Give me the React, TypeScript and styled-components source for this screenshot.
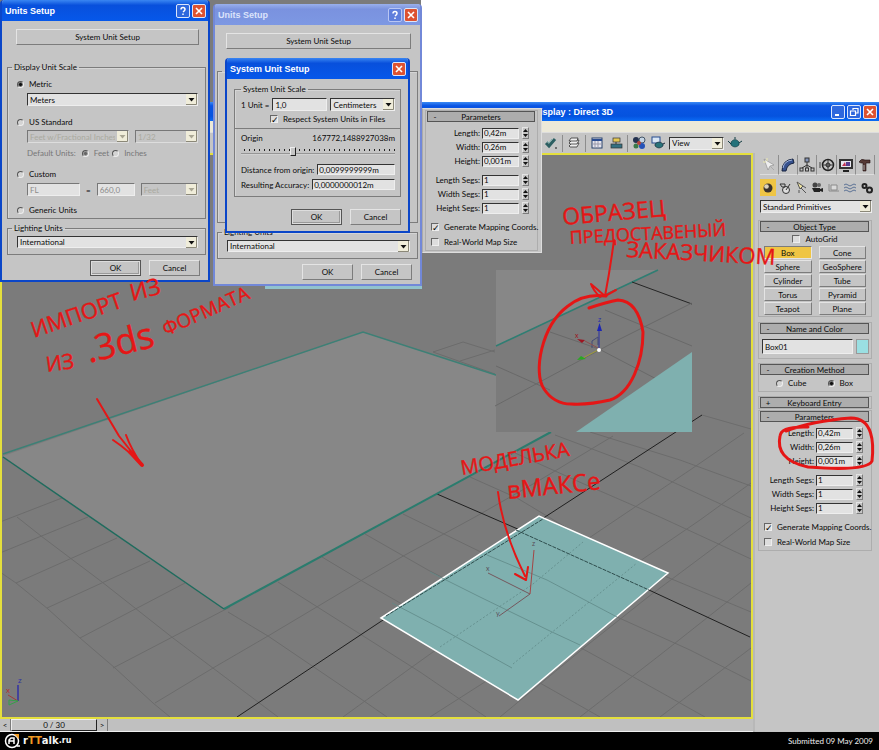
import React, { ReactNode, useId } from 'react';
import styled, { createGlobalStyle, css } from 'styled-components';

const FACE = '#c5c5c5';
const LIGHT = '#e4e4e4';
const DARK = '#7c7c7c';
const RED = '#e51616';
const FONT = 'Lato, "Liberation Sans", Arial, sans-serif';
const TITLE_FONT = '"Liberation Sans", Arial, sans-serif';

const Global = createGlobalStyle`
  *, *::before, *::after { box-sizing: border-box; }
  body { margin: 0; background: #fff; font: 8px/10px ${FONT}; color: #0a0a0a; }
  button, input, select { font: inherit; color: inherit; margin: 0; border-radius: 0; }
`;

const bevel = css`
  border: 1px solid;
  border-color: ${LIGHT} ${DARK} ${DARK} ${LIGHT};
`;
const sunken = css`
  border: 1px solid;
  border-color: #333 #eee #eee #333;
`;

/* ---------- page ---------- */
const Page = styled.div`
  position: relative;
  display: flex;
  flex-direction: column;
  min-height: 100vh;
  overflow: hidden;
`;
const Desktop = styled.div`
  height: 102px;
  max-width: 421px;
  background: #7b7b7b;
`;
const TitleBar = styled.header`
  display: flex;
  align-items: center;
  height: 19px;
  padding: 0 2px;
  background: linear-gradient(#3b8bf5, #0a55e4 20%, #0553df 75%, #0a6cf5);
`;
const AppTitle = styled.h1`
  margin: 0 auto 0 0;
  width: 611px;
  text-align: right;
  white-space: pre;
  color: #fff;
  font: bold 9px/12px ${TITLE_FONT};
`;
const CaptionButtons = styled.div`
  display: flex;
  gap: 2px;
`;
const CaptionButton = styled.button<{ $tone?: 'red' | 'soft' }>`
  display: grid;
  place-items: center;
  width: 14px;
  height: 14px;
  padding: 0;
  border: 1px solid ${(p) => (p.$tone === 'soft' ? '#b9c6f3' : '#dbe6fb')};
  border-radius: 2px;
  color: #fff;
  background: ${(p) => (p.$tone === 'red' ? '#dd5231' : p.$tone === 'soft' ? '#5f7fdc' : '#2f68dd')};
  svg { width: 10px; height: 10px; }
`;
const MenuStrip = styled.div`
  height: 11px;
  background: #ece9d8;
`;
const Toolbar = styled.div`
  display: flex;
  align-items: center;
  gap: 3px;
  height: 21px;
  padding-left: 543px;
  background: ${FACE};
  border-top: 1px solid #ddd;
`;
const ToolButton = styled.button`
  display: grid;
  place-items: center;
  width: 16px;
  height: 16px;
  padding: 0;
  border: 0;
  background: none;
  svg { width: 14px; height: 14px; }
`;
const Separator = styled.i<{ $wide?: boolean }>`
  width: 1px;
  height: 17px;
  background: #8d8d8d;
`;
const Workspace = styled.div`
  flex: 1;
  display: flex;
  min-height: 0;
  background: ${FACE};
`;
const MainColumn = styled.main`
  flex: 1;
  display: flex;
  flex-direction: column;
  min-width: 0;
`;
const Viewport = styled.div`
  flex: 1;
  min-height: 0;
  display: flex;
  border: 2px solid #e4df3c;
  background: #7b7b7b;
`;
const Scene = styled.svg`
  flex: 1;
  min-width: 0;
  width: 100%;
  height: 562px;
`;
const Timeline = styled.div`
  display: flex;
  height: 13px;
  background: #c0c0c0;
  border-bottom: 1px solid #eee;
`;
const TimeButton = styled.button`
  width: 11px;
  padding: 0;
  border: 0;
  border-right: 1px solid ${DARK};
  background: none;
`;
const TimeSlider = styled.button`
  width: 86px;
  padding: 0;
  background: ${FACE};
  border: 1px solid;
  border-color: #eee #222 #222 #eee;
`;
const Footer = styled.footer`
  display: flex;
  align-items: center;
  justify-content: space-between;
  height: 18px;
  padding: 0 6px 0 4px;
  background: #000;
  color: #eee;
`;
const Brand = styled.a`
  display: flex;
  align-items: center;
  color: #f4f4f4;
  font: bold 10px/12px "DejaVu Sans", sans-serif;
  text-decoration: none;
  svg { width: 19px; height: 18px; }
  em { font-style: normal; color: #f09a22; }
  small { font-size: 8px; }
`;

/* ---------- controls ---------- */
const PushButton = styled.button<{ $default?: boolean; $active?: boolean; $h?: number }>`
  ${bevel}
  min-width: 0;
  height: ${(p) => p.$h ?? 16}px;
  padding: 0;
  line-height: 8px;
  white-space: nowrap;
  background: ${(p) => (p.$active ? '#efc544' : FACE)};
  ${(p) => p.$active && `border-color: ${DARK} ${LIGHT} ${LIGHT} ${DARK};`}
  ${(p) => p.$default && 'border-color: #555; box-shadow: inset 0 0 0 1px #ddd, inset -2px -2px #999;'}
`;
const Field = styled.input`
  ${sunken}
  width: 100%;
  min-width: 0;
  height: 13px;
  padding: 0 2px;
  background: #e2e2e2;
  &:disabled { color: #8b8b8b; border-color: #777 #eee #eee #777; }
`;
const PickBox = styled.div`
  display: grid;
  flex: 1;
  min-width: 0;
  height: 13px;
  select {
    ${sunken}
    appearance: none;
    grid-area: 1 / 1;
    width: 100%;
    min-width: 0;
    padding: 0 13px 0 2px;
    background: #e2e2e2;
    white-space: nowrap;
    overflow: hidden;
  }
  select:disabled { color: #aaaaa0; background: ${FACE}; border-color: #777 #ddd #ddd #777; opacity: 1; }
  svg {
    grid-area: 1 / 1;
    justify-self: end;
    align-self: center;
    width: 11px;
    height: 11px;
    margin-right: 1px;
    pointer-events: none;
  }
`;
function Pick({ label, value, disabled }: { label: string; value: string; disabled?: boolean }) {
  return (
    <PickBox>
      <select aria-label={label} disabled={disabled} defaultValue={value}>
        <option>{value}</option>
      </select>
      <svg viewBox="0 0 11 11">
        <rect width="11" height="11" fill="#f0edda" />
        <path d="M10.5 0V10.5H0" fill="none" stroke="#8b8878" />
        <path d="M2.5 4h6L5.500 7.500z" fill={disabled ? '#aaa794' : '#111'} />
      </svg>
    </PickBox>
  );
}
const CheckLabel = styled.label<{ $muted?: boolean }>`
  display: flex;
  align-items: center;
  gap: 5px;
  height: 10px;
  white-space: nowrap;
  color: ${(p) => (p.$muted ? '#777' : 'inherit')};
`;
const Radio = styled.input`
  appearance: none;
  width: 7px;
  height: 7px;
  border: 1px solid;
  border-color: #555 #eee #eee #555;
  border-radius: 50%;
  background: #d4d4d4;
  &:checked { background: radial-gradient(#111 0 1px, #ccc 3px); }
  &:disabled:checked { background: radial-gradient(#666 0 1px, #ccc 3px); }
`;
const CheckBox = styled.input`
  appearance: none;
  display: grid;
  place-items: center;
  width: 8px;
  height: 8px;
  border: 1px solid;
  border-color: #666 #eee #eee #666;
  background: #ddd;
  &:checked::after {
    content: '✓';
    font: bold 9px/8px "DejaVu Sans", sans-serif;
    color: #000;
  }
`;
const RadioItem = ({ name, text, checked, disabled }: { name: string; text: string; checked?: boolean; disabled?: boolean }) => (
  <CheckLabel $muted={disabled}>
    <Radio type="radio" name={name} defaultChecked={checked} disabled={disabled} />
    {text}
  </CheckLabel>
);
const CheckItem = ({ text, checked }: { text: string; checked?: boolean }) => (
  <CheckLabel>
    <CheckBox type="checkbox" defaultChecked={checked} />
    {text}
  </CheckLabel>
);

/* ---------- dialogs ---------- */
const Dialog = styled.section<{ $x: number; $y: number; $w: number; $soft?: boolean }>`
  position: absolute;
  left: ${(p) => p.$x}px;
  top: ${(p) => p.$y}px;
  width: ${(p) => p.$w}px;
  border: 2px solid ${(p) => (p.$soft ? '#7288d8' : '#0b46c8')};
  border-top: 0;
  border-radius: 4px 4px 0 0;
  overflow: hidden;
  background: ${FACE};
`;
const DialogBar = styled.header<{ $soft?: boolean }>`
  display: flex;
  align-items: center;
  justify-content: space-between;
  height: 21px;
  padding: 1px 2px 0 3px;
  color: ${(p) => (p.$soft ? '#dbe3fb' : '#fff')};
  background: ${(p) =>
    p.$soft ? 'linear-gradient(#9ab0ec, #7a92df 25%, #7d98e3)' : 'linear-gradient(#3a86f2, #0850dc 25%, #0658ea)'};
`;
const DialogTitle = styled.h2`
  margin: 0;
  font: bold 9px/12px ${TITLE_FONT};
`;
const DialogBody = styled.form<{ $left: number }>`
  display: flex;
  flex-direction: column;
  padding: 8px 2px 4px ${(p) => p.$left}px;
`;
const Group = styled.fieldset<{ $sys?: boolean; $covered?: boolean }>`
  display: flex;
  flex-direction: column;
  min-width: 0;
  margin: 0;
  padding: ${(p) => (p.$sys ? '4px 5px 6px 6px' : '3px 7px 3px 9px')};
  border: 1px solid ${DARK};
  box-shadow: inset 1px 1px #d5d5d5;
  legend { height: 10px; margin-left: ${(p) => (p.$sys ? 0 : -5)}px; padding: 0 2px; }
  ${(p) => p.$covered && '> * { visibility: hidden; }'}
`;
const LightingGroup = styled(Group)`
  margin-top: 4px;
  padding-bottom: 6px;
`;
const Indent = styled.div<{ $top?: number }>`
  display: flex;
  align-items: center;
  gap: 6px;
  padding-left: 10px;
  margin-top: ${(p) => p.$top ?? 4}px;
`;
const MutedIndent = styled(Indent)`
  color: #777;
`;
const Fixed = styled.div<{ $w: number }>`
  display: flex;
  flex: none;
  width: ${(p) => p.$w}px;
`;
const WideButton = styled(PushButton)`
  margin: 0 7px 17px 9px;
`;
const Actions = styled.div`
  display: flex;
  justify-content: flex-end;
  gap: 8px;
  padding-right: 6px;
  margin-top: 5px;
  button { width: 51px; }
`;
const BodyRow = styled.div<{ $top?: number; $between?: boolean }>`
  display: flex;
  align-items: center;
  justify-content: ${(p) => (p.$between ? 'space-between' : 'flex-start')};
  gap: 3px;
  margin-top: ${(p) => p.$top ?? 0}px;
  white-space: nowrap;
`;
const Shift = styled.div`
  margin-top: 3px;
  padding-left: 29px;
`;
const Rule = styled.hr`
  align-self: stretch;
  margin: 4px -5px 4px -6px;
  border: 0;
  border-top: 1px solid ${DARK};
`;
const OriginSlider = styled.input`
  appearance: none;
  height: 11px;
  width: 100%;
  margin: 3px 0 7px;
  background:
    repeating-linear-gradient(90deg, #222 0 1px, transparent 1px 5px) 3px 3px / 100% 2px no-repeat,
    linear-gradient(#777, #eee) 0 7px / 100% 2px no-repeat;
  &::-webkit-slider-thumb {
    appearance: none;
    width: 6px;
    height: 9px;
    background: ${FACE};
    border: 1px solid;
    border-color: #eee #222 #222 #eee;
  }
`;
const ShortField = styled(Field)`
  height: 11px;
  width: 88px;
  padding: 0 1px;
  margin-left: auto;
`;

const CloseGlyph = () => (
  <svg viewBox="0 0 10 10"><path d="M2 2l6 6M8 2L2 8" stroke="#fff" strokeWidth="1.6" /></svg>
);
const HelpGlyph = () => (
  <svg viewBox="0 0 10 10"><path d="M3 3.500Q3 1.500 5 1.500T7 3.500Q7 4.500 5 6M5 7.500V9" fill="none" stroke="#fff" strokeWidth="1.500" /></svg>
);

function UnitsDialog({ x, y, w, soft }: { x: number; y: number; w: number; soft?: boolean }) {
  const name = useId();
  return (
    <Dialog $x={x} $y={y} $w={w} $soft={soft} aria-label="Units Setup">
      <DialogBar $soft={soft}>
        <DialogTitle>Units Setup</DialogTitle>
        <CaptionButtons>
          <CaptionButton aria-label="Help" $tone={soft ? 'soft' : undefined}><HelpGlyph /></CaptionButton>
          <CaptionButton aria-label="Close" $tone="red"><CloseGlyph /></CaptionButton>
        </CaptionButtons>
      </DialogBar>
      <DialogBody $left={soft ? 2 : 5}>
        <WideButton type="button">System Unit Setup</WideButton>
        <Group $covered={soft}>
          <legend>Display Unit Scale</legend>
          <BodyRow $top={4}><RadioItem name={name} text="Metric" checked /></BodyRow>
          <Indent><Pick label="Metric unit" value="Meters" /></Indent>
          <BodyRow $top={11}><RadioItem name={name} text="US Standard" /></BodyRow>
          <Indent $top={3}>
            <Fixed $w={102}><Pick label="US unit" value="Feet w/Fractional Inches" disabled /></Fixed>
            <Pick label="Fraction" value="1/32" disabled />
          </Indent>
          <MutedIndent $top={5}>
            Default Units:
            <BodyRow>
              <RadioItem name={name + 'd'} text="Feet" checked disabled />
              <RadioItem name={name + 'd'} text="Inches" disabled />
            </BodyRow>
          </MutedIndent>
          <BodyRow $top={11}><RadioItem name={name} text="Custom" /></BodyRow>
          <Indent>
            <Fixed $w={53}><Field aria-label="Custom unit name" defaultValue="FL" disabled /></Fixed>
            =
            <Fixed $w={38}><Field aria-label="Custom unit size" defaultValue="660,0" disabled /></Fixed>
            <Pick label="Custom unit base" value="Feet" disabled />
          </Indent>
          <BodyRow $top={9}><RadioItem name={name} text="Generic Units" /></BodyRow>
        </Group>
        <LightingGroup>
          <legend>Lighting Units</legend>
          <Pick label="Lighting units" value="International" />
        </LightingGroup>
        <Actions>
          <PushButton type="button" $default={!soft}>OK</PushButton>
          <PushButton type="button">Cancel</PushButton>
        </Actions>
      </DialogBody>
    </Dialog>
  );
}

const SystemBody = styled(DialogBody)`
  padding-top: 5px;
  padding-right: 7px;
  padding-bottom: 6px;
`;
const SystemActions = styled(Actions)`
  margin-top: 12px;
  padding-right: 0;
`;
function SystemUnitDialog() {
  return (
    <Dialog $x={225} $y={58} $w={185} aria-label="System Unit Setup">
      <DialogBar>
        <DialogTitle>System Unit Setup</DialogTitle>
        <CaptionButton aria-label="Close" $tone="red"><CloseGlyph /></CaptionButton>
      </DialogBar>
      <SystemBody $left={7}>
        <Group $sys>
          <legend>System Unit Scale</legend>
          <BodyRow>
            <label htmlFor="unit-size">1 Unit =</label>
            <Fixed $w={55}><Field id="unit-size" defaultValue="1,0" /></Fixed>
            <Pick label="System unit" value="Centimeters" />
          </BodyRow>
          <Shift><CheckItem text="Respect System Units in Files" checked /></Shift>
          <Rule />
          <BodyRow $between>
            <label htmlFor="origin">Origin</label>
            <output>167772,1488927038m</output>
          </BodyRow>
          <OriginSlider id="origin" type="range" min={0} max={100} defaultValue={33} />
          <BodyRow>
            <label htmlFor="distance">Distance from origin:</label>
            <ShortField id="distance" defaultValue="0,0099999999m" />
          </BodyRow>
          <BodyRow $top={4}>
            <label htmlFor="accuracy">Resulting Accuracy:</label>
            <ShortField id="accuracy" defaultValue="0,0000000012m" />
          </BodyRow>
        </Group>
        <SystemActions>
          <PushButton type="button" $default>OK</PushButton>
          <PushButton type="button">Cancel</PushButton>
        </SystemActions>
      </SystemBody>
    </Dialog>
  );
}

/* ---------- command panel ---------- */
const CommandPanel = styled.aside`
  display: flex;
  flex-direction: column;
  width: 126px;
  padding: 2px 8px 0 5px;
  border-left: 2px solid #b8b8b8;
  background: ${FACE};
`;
const Tabs = styled.div`
  display: grid;
  grid-template-columns: repeat(6, 1fr);
  height: 20px;
  margin: 0 -4px 4px 0;
`;
const Tab = styled.button`
  display: grid;
  place-items: center;
  padding: 0;
  border: 0;
  border-right: 1px solid #8e8e8e;
  border-bottom: 1px solid #ddd;
  background: none;
  svg { width: 16px; height: 16px; }
`;
const Categories = styled.div`
  display: grid;
  grid-template-columns: repeat(7, 1fr);
  height: 17px;
  margin: 0 -4px 4px 0;
`;
const Category = styled.button<{ $on?: boolean }>`
  display: grid;
  place-items: center;
  padding: 0;
  border: 0;
  background: ${(p) => (p.$on ? '#efc544' : 'none')};
  svg { width: 14px; height: 14px; }
`;
const Rollout = styled.section<{ $gap?: number }>`
  margin: 0 -1px ${(p) => p.$gap ?? 4}px -2px;
  padding: 0 2px 0 1px;
  border: 1px solid #adadad;
`;
const RolloutHead = styled.button`
  display: grid;
  grid-template-columns: 8px 1fr 8px;
  align-items: center;
  width: 100%;
  height: 11px;
  padding: 0 3px;
  border: 1px solid #555;
  background: #adadad;
  line-height: 8px;
`;
const RolloutBody = styled.div<{ $pad: string }>`
  padding: ${(p) => p.$pad};
`;
function Roll({ title, pad, closed, gap, children }: { title: string; pad?: string; closed?: boolean; gap?: number; children?: ReactNode }) {
  return (
    <Rollout $gap={gap}>
      <RolloutHead type="button" aria-expanded={!closed}>
        <span>{closed ? '+' : '-'}</span>
        <span>{title}</span>
      </RolloutHead>
      {children && <RolloutBody $pad={pad ?? '4px'}>{children}</RolloutBody>}
    </Rollout>
  );
}
const ButtonGrid = styled.div`
  display: grid;
  grid-template-columns: 1fr 1fr;
  gap: 1px 7px;
  margin-top: 2px;
`;
const Centered = styled.div<{ $gap?: number }>`
  display: flex;
  justify-content: center;
  gap: ${(p) => p.$gap ?? 0}px;
`;
const NameRow = styled.div`
  display: flex;
  gap: 3px;
`;
const NameField = styled(Field)`
  height: 15px;
`;
const Swatch = styled.button`
  flex: none;
  width: 13px;
  height: 15px;
  padding: 0;
  border: 1px solid #999;
  background: #9adfe2;
`;
const ParamRow = styled.div<{ $top: number }>`
  display: grid;
  grid-template-columns: 1fr 37px 8px;
  column-gap: 2px;
  align-items: center;
  height: 14px;
  margin-top: ${(p) => p.$top}px;
  padding-right: 6px;
  label { text-align: right; white-space: nowrap; }
  button { margin-left: 1px; }
`;
const ParamField = styled(Field)`
  height: 11px;
  padding: 0 1px;
`;
const Spinner = styled.button`
  ${bevel}
  display: grid;
  place-items: center;
  width: 7px;
  height: 12px;
  padding: 0;
  background: ${FACE};
  svg { width: 5px; height: 10px; }
`;
const Checks = styled.div`
  display: grid;
  gap: 5px;
  padding: 7px 0 3px 4px;
`;
const PARAMS: [string, string, number][] = [
  ['Length:', '0,42m', 4], ['Width:', '0,26m', 0], ['Height:', '0,001m', 0],
  ['Length Segs:', '1', 5], ['Width Segs:', '1', 0], ['Height Segs:', '1', 0],
];
function Parameters() {
  const id = useId();
  return (
    <Roll title="Parameters" pad="0">
      {PARAMS.map(([label, value, top], i) => (
        <ParamRow key={label} $top={top}>
          <label htmlFor={id + i}>{label}</label>
          <ParamField id={id + i} defaultValue={value} />
          <Spinner type="button" aria-label={'Adjust ' + label}>
            <svg viewBox="0 0 5 10"><path d="M0 4l2.500-3L5 4zM0 6h5L2.500 9z" fill="#111" /></svg>
          </Spinner>
        </ParamRow>
      ))}
      <Checks>
        <CheckItem text="Generate Mapping Coords." checked />
        <CheckItem text="Real-World Map Size" />
      </Checks>
    </Roll>
  );
}
const FloatingPanel = styled.section`
  position: absolute;
  left: 422px;
  top: 108px;
  width: 120px;
  height: 145px;
  padding: 1px 4px 0;
  background: ${FACE};
  border: 1px solid #ddd;
  border-left-color: #aaa;
`;

const TAB_ICONS: [string, ReactNode][] = [
  ['Create', <g key="i"><path d="M3 2l4 11 2-4 4-1z" fill="#eee" stroke="#888" strokeWidth=".6" /><path d="M9 9l4 4" stroke="#aaa" /><path d="M2 5h3M6 1v3" stroke="#ece9b0" /></g>],
  ['Modify', <g key="i"><path d="M2 14Q2 3 13 2l1 4Q7 7 6 14z" fill="#36518e" stroke="#16233f" /><path d="M3 11q1-7 9-8" fill="none" stroke="#a8b9df" /></g>],
  ['Hierarchy', <g key="i" fill="none" stroke="#333"><rect x="6" y="1" width="4" height="4" fill="#8293b7" /><path d="M8 5v3M3 11L8 8l5 3M8 8v3" /><rect x="1" y="11" width="3" height="3" /><rect x="6.500" y="11" width="3" height="3" /><rect x="12" y="11" width="3" height="3" /></g>],
  ['Motion', <g key="i" fill="none" stroke="#222"><circle cx="9" cy="8" r="5.500" strokeWidth="1.500" /><circle cx="9" cy="8" r="2" /><path d="M9 3v10M4 8h10M0 6h2M0 8h2M0 10h2" strokeWidth=".8" /></g>],
  ['Display', <g key="i"><rect x="1" y="2" width="14" height="10" fill="#333" /><rect x="3" y="4" width="10" height="6" fill="#e8e8f0" /><path d="M4 9l3-4 1 4z" fill="#c33052" /><rect x="8" y="5" width="4" height="4" fill="#593f91" /><path d="M5 14h6" stroke="#222" strokeWidth="2" /></g>],
  ['Utilities', <g key="i"><path d="M2 5Q4 1 8 3h5v3H9v8H6V6H4z" fill="#563a36" stroke="#211" strokeWidth=".6" /><path d="M7 8v5" stroke="#aaa" /></g>],
];
const CATEGORY_ICONS: [string, ReactNode][] = [
  ['Geometry', <g key="i"><circle cx="7" cy="7" r="4.500" fill="#39322c" /><circle cx="5.500" cy="5.500" r="2.300" fill="#ddd2ba" /></g>],
  ['Shapes', <g key="i" fill="none" stroke="#333"><circle cx="8" cy="9" r="3.500" fill="#ddd" /><path d="M2 3h5v3H4zM8 9l4-6" /></g>],
  ['Lights', <g key="i"><path d="M3 1l3 7 3-3z" fill="#eee3a0" stroke="#555" /><path d="M7 7l5 5M9 5l3 2M5 9v3" stroke="#555" /></g>],
  ['Cameras', <g key="i"><circle cx="5" cy="4" r="2.500" fill="#444" /><circle cx="9" cy="4" r="2" fill="#666" /><path d="M2 7h8v4H4zM10 8l3-1v4l-3-1z" fill="#222" /></g>],
  ['Helpers', <g key="i" fill="none" stroke="#8a8a8a"><path d="M2 3v7h10" /><path d="M4 4h6v5H4z" fill="#dadada" /></g>],
  ['Space Warps', <g key="i" fill="none" stroke="#5d7396"><path d="M1 4q2-2 4 0t4 0 4 0M1 7q2-2 4 0t4 0 4 0M1 10q2-2 4 0t4 0 4 0" /></g>],
  ['Systems', <g key="i" fill="none" stroke="#222" strokeWidth="2"><circle cx="4.500" cy="5" r="2" /><circle cx="9.500" cy="9" r="2.500" /></g>],
];
const PRIMITIVES = ['Box', 'Cone', 'Sphere', 'GeoSphere', 'Cylinder', 'Tube', 'Torus', 'Pyramid', 'Teapot', 'Plane'];
const PrimitiveSet = styled.div`
  display: flex;
  margin: 0 -1px 7px 0;
`;

function Commands() {
  return (
    <CommandPanel>
      <Tabs>
        {TAB_ICONS.map(([n, icon]) => (
          <Tab key={n} aria-label={n}><svg viewBox="0 0 16 16">{icon}</svg></Tab>
        ))}
      </Tabs>
      <Categories>
        {CATEGORY_ICONS.map(([n, icon], i) => (
          <Category key={n} aria-label={n} $on={i === 0}><svg viewBox="0 0 14 14">{icon}</svg></Category>
        ))}
      </Categories>
      <PrimitiveSet><Pick label="Primitive set" value="Standard Primitives" /></PrimitiveSet>
      <Roll title="Object Type" pad="2px 3px 1px 4px" gap={5}>
        <Centered><CheckItem text="AutoGrid" /></Centered>
        <ButtonGrid>
          {PRIMITIVES.map((p, i) => (
            <PushButton key={p} type="button" $h={13} $active={i === 0}>{p}</PushButton>
          ))}
        </ButtonGrid>
      </Roll>
      <Roll title="Name and Color" pad="5px 0 4px 2px">
        <NameRow>
          <NameField aria-label="Object name" defaultValue="Box01" />
          <Swatch type="button" aria-label="Object color" />
        </NameRow>
      </Roll>
      <Roll title="Creation Method" pad="3px 0 3px">
        <Centered $gap={21}>
          <RadioItem name="creation" text="Cube" />
          <RadioItem name="creation" text="Box" checked />
        </Centered>
      </Roll>
      <Roll title="Keyboard Entry" closed gap={1} />
      <Parameters />
    </CommandPanel>
  );
}

/* ---------- main toolbar ---------- */
const icon = (children: ReactNode) => <svg viewBox="0 0 14 14">{children}</svg>;
function MainToolbar() {
  return (
    <Toolbar role="toolbar">
      <ToolButton aria-label="Align">{icon(<><path d="M2 7l3 3 6-7" fill="none" stroke="#2c5f62" strokeWidth="3" /><path d="M3 5l2 2 3-4" stroke="#7fb0ad" fill="none" /><circle cx="12" cy="12" r=".8" /></>)}</ToolButton>
      <Separator />
      <ToolButton aria-label="Layers">{icon(<g fill="#eee" stroke="#333" strokeWidth=".8"><path d="M2 10l3-3h7l-2 4H3z" /><path d="M2 7l3-3h7l-2 4H3z" /><path d="M2 5l2-3h7l-1 3z" /></g>)}</ToolButton>
      <Separator />
      <ToolButton aria-label="Curve Editor">{icon(<><rect x="2" y="2" width="10" height="10" fill="#e5e5ee" stroke="#29426c" /><path d="M2 4h10" stroke="#2b4d91" strokeWidth="2" /><path d="M5 5v7M8 5v7M3 8h9" stroke="#99a" /></>)}</ToolButton>
      <ToolButton aria-label="Schematic View">{icon(<><rect x="4" y="2" width="7" height="4" fill="#e5c852" stroke="#333" strokeWidth=".7" /><rect x="2" y="8" width="11" height="4" fill="#347081" stroke="#333" strokeWidth=".7" /><path d="M7 6v2" stroke="#333" /></>)}</ToolButton>
      <Separator />
      <ToolButton aria-label="Material Editor">{icon(<><circle cx="4" cy="4" r="3" fill="#24324f" /><circle cx="10" cy="4" r="3" fill="#c4d4e4" stroke="#456" /><circle cx="10" cy="10" r="3" fill="#2552b8" /><circle cx="4" cy="10" r="2.500" fill="#397a48" /><circle cx="7" cy="7" r="2" fill="#b5423b" /></>)}</ToolButton>
      <ToolButton aria-label="Render Scene">{icon(<><rect x="1" y="1" width="8" height="6" fill="#d9e6f4" stroke="#264d8f" /><path d="M4 8q4-4 8 0v2q-4 4-8 0z" fill="#2a737a" stroke="#123" strokeWidth=".6" /><path d="M12 8l2-1" stroke="#123" /></>)}</ToolButton>
      <Fixed $w={55}><Pick label="Render type" value="View" /></Fixed>
      <ToolButton aria-label="Quick Render">{icon(<><path d="M3 6q4-5 8 0v3q-4 4-8 0z" fill="#25727b" stroke="#103a40" strokeWidth=".6" /><path d="M11 7l3-2M3 8L0 5M7 3V1" stroke="#103a40" /></>)}</ToolButton>
    </Toolbar>
  );
}

/* ---------- scene ---------- */
const GRID = [
  'M17 517L41 536 102 582 173 638 278 717', 'M0 572L16 583 48 609 80 638 115 668 153 703 170 717',
  'M228 612L268 636 361 699 387 717', 'M278 582L420 672 486 717', 'M322 557L362 581 381 592 503 662 600 717',
  'M365 534L428 570 480 597 552 632 603 660 705 717', 'M403 514L487 555 547 580 617 617 690 650 751 681',
  'M470 477L517 498 587 540 650 570 751 612', 'M515 453L584 484 660 517 751 559', 'M555 435L640 467 751 518', 'M590 432L680 460 751 486', 'M702 415L751 429',
  'M0 522L62 498', 'M0 553L88 517', 'M16 583L117 538', 'M47 608L150 561', 'M80 638L185 583', 'M113 668L230 607',
  'M155 703L213 668 268 636 362 580 405 555 475 517 540 480 613 436',
  'M343 717L412 667 440 647 533 584 583 542 690 470 744 433', 'M430 717L513 664 580 609 637 563 700 520 751 483',
  'M500 717L585 647 648 597 751 520', 'M580 717L660 655 751 583', 'M660 717L751 648',
  'M433 352L463 342 495 352M433 352L495 374M460 361L495 350',
];
function SceneDrawing() {
  return (
    <Scene viewBox="2 155 749 562" preserveAspectRatio="xMinYMin slice" role="img" aria-label="Perspective viewport">
      <rect x="265" y="284" width="157" height="5" fill="#91c3cd" />
      <g fill="none" stroke="#6c6c6c">{GRID.map((d) => <path key={d} d={d} />)}</g>
      <path d="M237 717L380 622 545 517 702 415M437 494L520 530 750 637" fill="none" stroke="#202020" />
      <path d="M3 456L363 332 499 376V432H551L224 609z" fill="#878787" />
      <path d="M3 454L363 332 499 376" fill="none" stroke="#3d8076" strokeWidth="1.500" />
      <path d="M551 432L224 609" stroke="#2b7c6e" strokeWidth="2" />
      <path d="M3 457L224 609" stroke="#1f6c5e" strokeWidth="1.500" />
      <path d="M381 618L539 516 668 573 518 700z" fill="#7fb0af" stroke="#fff" strokeWidth="1.500" />
      <g fill="none" stroke="#5f8988" strokeWidth=".8">
        <path d="M392 603L440 628 512 668M430 572L480 597 552 632 580 645M487 555L547 580 617 617" />
        <path d="M440 647L533 584 583 542M513 664L637 563" strokeDasharray="2 2" />
      </g>
      <path d="M386 616L543 519M516 530L649 590" stroke="#2e4d4d" fill="none" strokeDasharray="4 1" />
      <g stroke="#75575d" fill="none"><path d="M488 573L530 594 499 616" /><path d="M530 594L534 550" stroke="#a34545" /></g>
      <g fill="#574e5a" fontFamily={FONT} fontSize="7"><text x="486" y="571">x</text><text x="496" y="616">y</text><text x="532" y="546">z</text></g>

      <rect x="496" y="270" width="196" height="162" fill="#7b7b7b" />
      <path d="M496 270H656L496 346z" fill="#878787" />
      <path d="M496 346L658 270" stroke="#2f7e73" strokeWidth="1.500" />
      <path d="M632 282L692 304" stroke="#252525" />
      <g fill="none" stroke="#696969"><path d="M692 303L620 339 495 406M605 310L692 346M550 332L599 349 664 383M496 366L550 390" /></g>
      <path d="M576 432L692 352V432z" fill="#7fb0af" />
      <g fill="none"><path d="M599 348V330" stroke="#2a30a5" /><path d="M597 331l2.500-8 2.500 8z" fill="#1b24b4" /><path d="M592 341l6-4v8M592 341v7" stroke="#444a78" /><path d="M598 348l-13-7" stroke="#8b5151" /><path d="M577 339l8 1-3 3z" fill="#9d1420" /><path d="M598 350l-15 8" stroke="#a09c36" /><path d="M577 360l4-4 5 3z" fill="#28a822" /></g>
      <circle cx="599" cy="350" r="2" fill="#fff" />
      <g fontFamily={FONT} fontSize="7"><text x="598" y="322" fill="#2a30a5">z</text><text x="575" y="338" fill="#9d1420">x</text></g>

      <path d="M18 701V685" stroke="#3131a5" strokeWidth="1.500" /><path d="M18 701L8 695" stroke="#a03a3a" /><path d="M18 701l-9 4v-5z" stroke="#35a04a" fill="none" />
      <g fontFamily={FONT} fontSize="8"><text x="18" y="683" fill="#3131a5">z</text><text x="6" y="693" fill="#b33030">x</text></g>
    </Scene>
  );
}

/* ---------- red pen notes ---------- */
const Notes = styled.svg`
  position: absolute;
  left: 0;
  top: 0;
  width: 879px;
  height: 750px;
  pointer-events: none;
  text { font-family: "Open Sans", "Noto Sans", sans-serif; fill: ${RED}; stroke: ${RED}; stroke-width: 0.4; }
`;
const NOTE_TEXT: [string, number, number, number, number][] = [
  ['ИМПОРТ', 34, 338, 22, -19], ['ИЗ', 132, 301, 23, -14],
  ['ИЗ', 47, 372, 21, -8], ['.3ds', 89, 363, 36, -14], ['ФОРМАТА', 166, 336, 19, -24],
  ['ОБРАЗЕЦ', 563, 225, 23, -5], ['ПРЕДОСТАВЕНЫЙ', 570, 244, 18, -3], ['ЗАКАЗЧИКОМ', 626, 257, 22, 3],
  ['МОДЕЛЬКА', 462, 475, 20, -10], ['вМАКСе', 508, 499, 24, -6],
];
function RedNotes() {
  return (
    <Notes viewBox="0 0 879 750">
      {NOTE_TEXT.map(([t, x, y, size, angle], i) => (
        <text key={i} fontSize={size} transform={`translate(${x} ${y}) rotate(${angle})`}>{t}</text>
      ))}
      <g fill="none" stroke={RED} strokeWidth="2" strokeLinecap="round" strokeLinejoin="round">
        <path d="M97 399L119 436L142 465M113 440Q128 450 142 465Q131 449 126 435" />
        <path d="M142 465L130 452" strokeWidth="4" />
        <path d="M614 240Q610 270 605 296M605 296L591 284Q593 290 600 297M605 296L616 290" />
        <path d="M606 296Q584 293 568 306C541 326 533 373 544 389Q554 404 571 404Q589 405 610 400C631 393 643 362 643 332Q638 301 618 300Q607 302 589 308" strokeWidth="3" />
        <path d="M498 492Q503 532 525 576M515 574L526 580 528 567" />
        <path d="M786 431Q812 421 851 418C873 418 874 443 872 461C868 470 833 469 808 467C784 462 777 450 780 436Q781 426 808 427" strokeWidth="3" />
      </g>
    </Notes>
  );
}

export default function App() {
  return (
    <Page>
      <Global />
      <Desktop />
      <TitleBar>
        <AppTitle>Display : Direct 3D</AppTitle>
        <CaptionButtons>
          <CaptionButton aria-label="Minimize"><svg viewBox="0 0 10 10"><path d="M2 8h4" stroke="#fff" strokeWidth="2" /></svg></CaptionButton>
          <CaptionButton aria-label="Restore"><svg viewBox="0 0 10 10"><path d="M4 3V1.500h5V6H7M1.500 4h5v4.500h-5z" fill="none" stroke="#fff" strokeWidth="1.200" /></svg></CaptionButton>
          <CaptionButton aria-label="Close" $tone="red"><CloseGlyph /></CaptionButton>
        </CaptionButtons>
      </TitleBar>
      <MenuStrip />
      <MainToolbar />
      <Workspace>
        <MainColumn>
          <Viewport><SceneDrawing /></Viewport>
          <Timeline>
            <TimeButton aria-label="Previous frame">&lt;</TimeButton>
            <TimeSlider>0 / 30</TimeSlider>
            <TimeButton aria-label="Next frame">&gt;</TimeButton>
          </Timeline>
        </MainColumn>
        <Commands />
      </Workspace>
      <Footer>
        <Brand href="#">
          <svg viewBox="0 0 19 18"><circle cx="8" cy="9" r="6.500" fill="none" stroke="#fff" strokeWidth="1.500" /><path d="M10 2h5v5z" fill="#f09a22" /><path d="M5 12V8l2-2h3v6M5 9h5M13 14h3" fill="none" stroke="#fff" strokeWidth="1.500" /></svg>
          r<em>TT</em>alk<small>.ru</small>
        </Brand>
        <span>Submitted 09 May 2009</span>
      </Footer>
      <UnitsDialog x={213} y={4} w={209} soft />
      <UnitsDialog x={0} y={0} w={210} />
      <SystemUnitDialog />
      <FloatingPanel><Parameters /></FloatingPanel>
      <RedNotes />
    </Page>
  );
}
